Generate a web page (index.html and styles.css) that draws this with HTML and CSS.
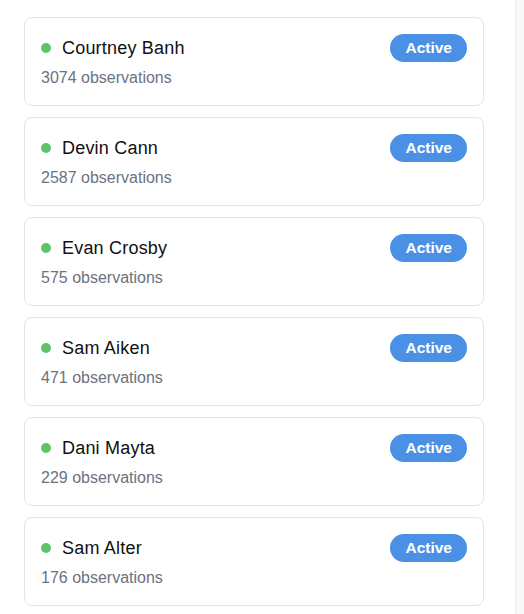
FILE: index.html
```html
<!DOCTYPE html>
<html>
<head>
<meta charset="utf-8">
<link rel="stylesheet" href="styles.css">
</head>
<body>
<div class="layout">
  <main class="list">
    <div class="card">
      <div class="card-head">
        <div class="who"><span class="dot"></span><span class="name">Courtney Banh</span></div>
        <span class="badge">Active</span>
      </div>
      <div class="meta">3074 observations</div>
    </div>
    <div class="card">
      <div class="card-head">
        <div class="who"><span class="dot"></span><span class="name">Devin Cann</span></div>
        <span class="badge">Active</span>
      </div>
      <div class="meta">2587 observations</div>
    </div>
    <div class="card">
      <div class="card-head">
        <div class="who"><span class="dot"></span><span class="name">Evan Crosby</span></div>
        <span class="badge">Active</span>
      </div>
      <div class="meta">575 observations</div>
    </div>
    <div class="card">
      <div class="card-head">
        <div class="who"><span class="dot"></span><span class="name">Sam Aiken</span></div>
        <span class="badge">Active</span>
      </div>
      <div class="meta">471 observations</div>
    </div>
    <div class="card">
      <div class="card-head">
        <div class="who"><span class="dot"></span><span class="name">Dani Mayta</span></div>
        <span class="badge">Active</span>
      </div>
      <div class="meta">229 observations</div>
    </div>
    <div class="card">
      <div class="card-head">
        <div class="who"><span class="dot"></span><span class="name">Sam Alter</span></div>
        <span class="badge">Active</span>
      </div>
      <div class="meta">176 observations</div>
    </div>
  </main>
  <aside class="side"></aside>
</div>
</body>
</html>
```

FILE: styles.css
```css
html, body {
  margin: 0;
  padding: 0;
  background: #ffffff;
  font-family: "Liberation Sans", Arial, sans-serif;
  overflow: hidden;
}

.layout {
  display: flex;
  height: 614px;
}

.list {
  width: 460px;
  padding: 17px 31px 0 24px;
  border-right: 1px solid #ececec;
  display: flex;
  flex-direction: column;
  gap: 11px;
}

.side {
  flex: 1;
  background: #f8f8f8;
}

.card {
  border: 1px solid #e4e4e4;
  border-radius: 8px;
  padding: 16px 16px 15px 16px;
  display: flex;
  flex-direction: column;
  gap: 4px;
}

.card-head {
  display: flex;
  align-items: center;
  justify-content: space-between;
  height: 28px;
}

.who {
  display: flex;
  align-items: center;
  gap: 11px;
}

.dot {
  width: 10px;
  height: 10px;
  border-radius: 50%;
  background: #5ec269;
}

.name {
  font-size: 18px;
  color: #111111;
  letter-spacing: 0.2px;
}

.badge {
  background: #4a91e6;
  color: #ffffff;
  font-weight: bold;
  font-size: 15.5px;
  line-height: 28px;
  height: 28px;
  padding: 0 15px;
  border-radius: 14px;
}

.meta {
  font-size: 16px;
  line-height: 24px;
  color: #6b7280;
}
```
